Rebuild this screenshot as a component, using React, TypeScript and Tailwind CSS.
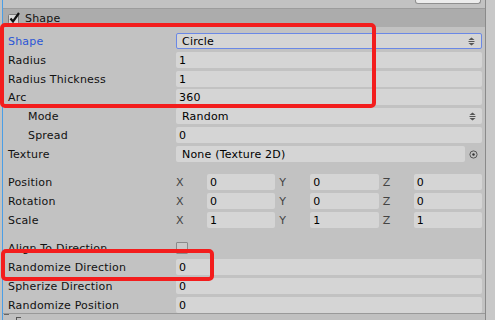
import React from "react";

const font = { fontFamily: '"DejaVu Sans", Verdana, sans-serif' };

function Label({ text, indent, blue }: { text: string; indent?: boolean; blue?: boolean }) {
  return (
    <div
      className={`w-[173px] h-[16px] flex items-center shrink-0 text-[11px] leading-none tracking-[0.2px] whitespace-nowrap ${indent ? "pl-[25px]" : "pl-[5px]"} ${blue ? "text-[#2a55d6]" : "text-[#111]"}`}
    >
      {text}
    </div>
  );
}

function Field({ text, pad = "pl-[3px]" }: { text: string; pad?: string }) {
  return (
    <div className={`flex-1 h-[16px] bg-[#d5d5d5] rounded-[2px] flex items-center text-[11px] leading-none tracking-[0.2px] text-black ${pad}`}>
      {text}
    </div>
  );
}

function Row({ children, h = "h-[19px]" }: { children: React.ReactNode; h?: string }) {
  return <div className={`flex items-start pr-[3px] ${h}`}>{children}</div>;
}

function Arrows() {
  return (
    <svg width="7" height="9" viewBox="0 0 7 9" className="mr-[6px]">
      <path d="M0.5 3 L3.5 0.5 L6.5 3 Z" fill="#555" />
      <rect x="0.5" y="4" width="6" height="1" fill="#555" />
      <path d="M0.5 6 L3.5 8.5 L6.5 6 Z" fill="#555" />
    </svg>
  );
}

function Vec({ label, v }: { label: string; v: [string, string, string] }) {
  const names = ["X", "Y", "Z"];
  return (
    <Row>
      <Label text={label} />
      <div className="flex-1 grid grid-cols-3 gap-[4px]">
        {v.map((val, i) => (
          <div key={i} className="flex h-[16px]">
            <div className="w-[31px] shrink-0 flex items-center text-[11px] leading-none text-[#444]">{names[i]}</div>
            <Field text={val} />
          </div>
        ))}
      </div>
    </Row>
  );
}

export default function App() {
  return (
    <div className="relative w-[495px] h-[320px] overflow-hidden bg-[#c2c2c2] flex" style={font}>
      <div className="w-[2px] shrink-0 bg-[#c2c2c2]" />
      <div className="w-[1px] shrink-0 bg-[#4a9ee6]" />
      <div className="flex-1 flex flex-col">
        <div className="h-[8px] flex justify-end bg-[#c2c2c2]">
          <div className="w-[66px] h-[4px] mr-[4px] bg-[#ececec] border border-t-0 border-[#8f8f8f] rounded-b-[3px]" />
        </div>
        <div className="h-[1px] bg-[#9c9c9c]" />
        <div className="h-[18px] bg-[#acacac] flex items-center pl-[5px] gap-[3px] text-[11px] leading-none tracking-[0.2px] text-[#111]">
          <svg width="14" height="12" viewBox="0 0 14 12">
            <rect x="0.5" y="2.5" width="10" height="9" fill="#dadada" stroke="#7a7a7a" rx="1" />
            <path d="M2.5 6.5 L5 9.5 L11 1" fill="none" stroke="#111" strokeWidth="2.2" />
          </svg>
          <span>Shape</span>
        </div>
        <div className="h-[6px]" />
        <Row>
          <Label text="Shape" blue />
          <div className="flex-1 h-[16px] bg-[#d5d5d5] border border-[#6a88e6] rounded-[2px] flex items-center justify-between pl-[5px] text-[11px] leading-none tracking-[0.2px] text-black">
            <span>Circle</span>
            <Arrows />
          </div>
        </Row>
        <Row>
          <Label text="Radius" />
          <Field text="1" />
        </Row>
        <Row h="h-[18px]">
          <Label text="Radius Thickness" />
          <Field text="1" />
        </Row>
        <Row>
          <Label text="Arc" />
          <Field text="360" />
        </Row>
        <Row>
          <Label text="Mode" indent />
          <div className="flex-1 h-[16px] bg-[#d5d5d5] rounded-[2px] flex items-center justify-between pl-[6px] text-[11px] leading-none tracking-[0.2px] text-black">
            <span>Random</span>
            <Arrows />
          </div>
        </Row>
        <Row>
          <Label text="Spread" indent />
          <Field text="0" />
        </Row>
        <Row>
          <Label text="Texture" />
          <div className="flex-1 flex items-center h-[16px]">
            <div className="flex-1 h-[16px] bg-[#d5d5d5] rounded-[2px] flex items-center pl-[6px] text-[11px] leading-none tracking-[0.2px] text-black">
              None (Texture 2D)
            </div>
            <div className="w-[17px] flex justify-center">
              <svg width="9" height="9" viewBox="0 0 9 9">
                <circle cx="4.5" cy="4.5" r="3.6" fill="none" stroke="#555" strokeWidth="1" />
                <circle cx="4.5" cy="4.5" r="1.2" fill="#333" />
              </svg>
            </div>
          </div>
        </Row>
        <div className="h-[9px]" />
        <Vec label="Position" v={["0", "0", "0"]} />
        <Vec label="Rotation" v={["0", "0", "0"]} />
        <Vec label="Scale" v={["1", "1", "1"]} />
        <div className="h-[9px]" />
        <Row>
          <Label text="Align To Direction" />
          <div className="flex-1 h-[16px] flex items-center">
            <div className="w-[12px] h-[12px] border border-[#8a8a8a] bg-[#c9c9c9] rounded-[1px]" />
          </div>
        </Row>
        <Row>
          <Label text="Randomize Direction" />
          <Field text="0" />
        </Row>
        <Row>
          <Label text="Spherize Direction" />
          <Field text="0" />
        </Row>
        <Row h="h-[16px]">
          <Label text="Randomize Position" />
          <Field text="0" />
        </Row>
        <div className="h-[1px] bg-[#999]" />
        <div className="flex-1 bg-[#c0c0c0] relative">
          <svg width="6" height="4" viewBox="0 0 6 4" className="absolute left-[1px] top-[0px]">
            <path d="M0 0.5 L5 0.5" stroke="#666" strokeWidth="1" />
          </svg>
          <div className="absolute left-[13px] top-[3px] w-[5px] h-[4px] border-t border-l border-[#555]" />
        </div>
      </div>
      <div className="w-[1px] shrink-0 bg-[#8a8a8a]" />
      <div className="w-[9px] shrink-0 bg-[#c8c8c8]" />
      <div className="absolute left-[0px] top-[23px] w-[376px] h-[85px] border-[4px] border-[#f31d1d] rounded-[5px]" />
      <div className="absolute left-[1px] top-[249px] w-[213px] h-[32px] border-[4px] border-[#f31d1d] rounded-[5px]" />
    </div>
  );
}
